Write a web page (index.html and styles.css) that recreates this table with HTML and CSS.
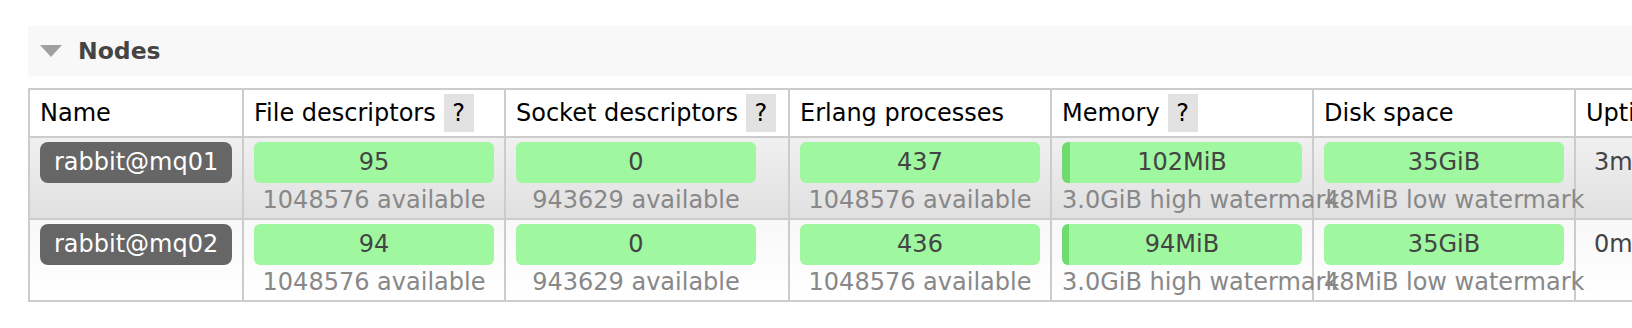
FILE: index.html
```html
<!DOCTYPE html>
<html lang="en">
<head>
<meta charset="utf-8">
<title>Nodes</title>
<link rel="stylesheet" href="styles.css">
</head>
<body>
<div class="page">
  <section class="section">
    <h2 class="section-title"><span class="toggle"></span>Nodes</h2>
    <table class="list">
      <thead>
        <tr>
          <th class="c-name">Name</th>
          <th class="c-fd">File descriptors<span class="help">?</span></th>
          <th class="c-sd">Socket descriptors<span class="help">?</span></th>
          <th class="c-ep">Erlang processes</th>
          <th class="c-mem">Memory<span class="help">?</span></th>
          <th class="c-disk">Disk space</th>
          <th class="c-up">Uptime</th>
          <th class="c-info">Info</th>
        </tr>
      </thead>
      <tbody>
        <tr class="alt1">
          <td><span class="node">rabbit@mq01</span></td>
          <td><div class="meter"><div class="bar">95</div><div class="sub">1048576 available</div></div></td>
          <td><div class="meter"><div class="bar">0</div><div class="sub">943629 available</div></div></td>
          <td><div class="meter"><div class="bar">437</div><div class="sub">1048576 available</div></div></td>
          <td><div class="meter"><div class="bar bar-mem" style="--used: 8px">102MiB</div><div class="sub">3.0GiB high watermark</div></div></td>
          <td><div class="meter"><div class="bar">35GiB</div><div class="sub">48MiB low watermark</div></div></td>
          <td class="uptime">3m 12s</td>
          <td class="info"></td>
        </tr>
        <tr class="alt2">
          <td><span class="node">rabbit@mq02</span></td>
          <td><div class="meter"><div class="bar">94</div><div class="sub">1048576 available</div></div></td>
          <td><div class="meter"><div class="bar">0</div><div class="sub">943629 available</div></div></td>
          <td><div class="meter"><div class="bar">436</div><div class="sub">1048576 available</div></div></td>
          <td><div class="meter"><div class="bar bar-mem" style="--used: 7px">94MiB</div><div class="sub">3.0GiB high watermark</div></div></td>
          <td><div class="meter"><div class="bar">35GiB</div><div class="sub">48MiB low watermark</div></div></td>
          <td class="uptime">0m 41s</td>
          <td class="info"></td>
        </tr>
      </tbody>
    </table>
  </section>
</div>
</body>
</html>
```
FILE: styles.css
```css
html, body {
  margin: 0;
  padding: 0;
  overflow: hidden;
  background: #fff;
}

body {
  font-family: "DejaVu Sans", Verdana, sans-serif;
  font-size: 24px;
  color: #000;
}

.page {
  padding: 26px 0 0 28px;
  width: 2400px;
}

.section-title {
  margin: 0;
  height: 50px;
  background: #f8f8f8;
  display: flex;
  align-items: center;
  padding-left: 12px;
  font-size: 23.5px;
  font-weight: bold;
  color: #444;
}

.toggle {
  width: 0;
  height: 0;
  border-left: 11px solid transparent;
  border-right: 11px solid transparent;
  border-top: 12px solid #a0a0a0;
  margin-right: 16px;
}

.list {
  margin-top: 12px;
  border-collapse: separate;
  border-spacing: 0;
  table-layout: fixed;
  width: 1800px;
  border-top: 2px solid #ccc;
  border-left: 2px solid #ccc;
}

.list th,
.list td {
  box-sizing: border-box;
  border-right: 2px solid #ccc;
  border-bottom: 2px solid #ccc;
  padding: 4px 10px;
  text-align: left;
  vertical-align: top;
  white-space: nowrap;
}

.list td {
  padding-bottom: 2px;
}

.list th {
  font-weight: normal;
  line-height: 38px;
  background: #fff;
  color: #000;
  overflow: hidden;
}

.c-name { width: 214px; }
.c-fd { width: 262px; }
.c-sd { width: 284px; }
.c-ep { width: 262px; }
.c-mem { width: 262px; }
.c-disk { width: 262px; }
.c-up { width: 200px; }
.c-info { width: 250px; }

.help {
  display: inline-block;
  width: 30px;
  margin-left: 8px;
  background: #e2e2e2;
  text-align: center;
  line-height: 38px;
  vertical-align: top;
}

.alt1 td {
  background: linear-gradient(to bottom, #f0f0f0 0%, #e0e0e0 100%);
}

.alt2 td {
  background: linear-gradient(to bottom, #f8f8f8 0%, #ffffff 100%);
}

.node {
  display: inline-block;
  padding: 0 14px;
  line-height: 41px;
  background: #666;
  color: #fff;
  border-radius: 8px;
}

.meter {
  width: 240px;
}

.bar {
  height: 41px;
  line-height: 41px;
  text-align: center;
  background: #9ff79f;
  color: #444;
  border-radius: 6px;
}

.bar-mem {
  background: linear-gradient(to right, #6fdc6f 0, #6fdc6f var(--used), #9ff79f var(--used), #9ff79f 100%);
}

.sub {
  padding-top: 2px;
  line-height: 31px;
  text-align: center;
  color: #888;
  white-space: nowrap;
}

.uptime {
  line-height: 41px;
  color: #444;
  padding-left: 18px !important;
}
```
